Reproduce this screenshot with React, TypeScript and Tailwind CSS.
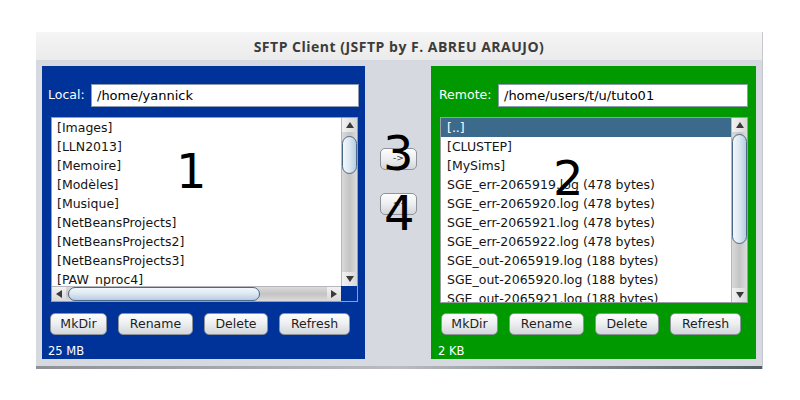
import React from 'react';

const localItems = [
  '[Images]',
  '[LLN2013]',
  '[Memoire]',
  '[Modèles]',
  '[Musique]',
  '[NetBeansProjects]',
  '[NetBeansProjects2]',
  '[NetBeansProjects3]',
  '[PAW_nproc4]',
];

const remoteItems = [
  '[..]',
  '[CLUSTEP]',
  '[MySims]',
  'SGE_err-2065919.log (478 bytes)',
  'SGE_err-2065920.log (478 bytes)',
  'SGE_err-2065921.log (478 bytes)',
  'SGE_err-2065922.log (478 bytes)',
  'SGE_out-2065919.log (188 bytes)',
  'SGE_out-2065920.log (188 bytes)',
  'SGE_out-2065921.log (188 bytes)',
];

function Arrow({ dir }: { dir: 'up' | 'down' | 'left' | 'right' }) {
  const points = {
    up: '4,1 8,7 0,7',
    down: '0,1 8,1 4,7',
    left: '1,4 7,0 7,8',
    right: '1,0 7,4 1,8',
  }[dir];
  return (
    <svg width="8" height="8" viewBox="0 0 8 8">
      <polygon points={points} fill="#3a3a3a" />
    </svg>
  );
}

function TextField({ value, width }: { value: string; width: string }) {
  return (
    <div className={`${width} h-[23px] bg-white border border-[#8d9bb0] flex items-center pl-[5px] text-[13px] text-black`}>
      {value}
    </div>
  );
}

function Button({ label, width }: { label: string; width: string }) {
  return (
    <div
      className={`${width} h-[22px] rounded-[5px] border border-[#8e9299] bg-gradient-to-b from-[#fdfdfd] via-[#eceef0] to-[#d3d6da] flex items-center justify-center text-[12.5px] text-[#1e1e1e]`}
    >
      {label}
    </div>
  );
}

function VScroll({ thumbTop, thumbHeight }: { thumbTop: string; thumbHeight: string }) {
  return (
    <div className="w-[16px] h-full flex flex-col border-l border-[#b4b8bd]">
      <div className="h-[14px] flex items-center justify-center bg-gradient-to-r from-[#f2f2f2] to-[#d8d8d8]">
        <Arrow dir="up" />
      </div>
      <div className="flex-1 flex flex-col bg-gradient-to-r from-[#dadada] via-[#c4c4c4] to-[#dcdcdc]">
        <div className={thumbTop} />
        <div
          className={`${thumbHeight} rounded-[8px] border border-[#4b6886] bg-gradient-to-r from-[#f3f8fc] via-[#dbe7f2] to-[#b8cde2]`}
        />
      </div>
      <div className="h-[14px] flex items-center justify-center bg-gradient-to-r from-[#f2f2f2] to-[#d8d8d8]">
        <Arrow dir="down" />
      </div>
    </div>
  );
}

function HScroll() {
  return (
    <div className="h-[15px] flex-1 flex border-t border-[#b4b8bd]">
      <div className="w-[14px] flex items-center justify-center bg-gradient-to-b from-[#f2f2f2] to-[#d8d8d8]">
        <Arrow dir="left" />
      </div>
      <div className="flex-1 flex bg-gradient-to-b from-[#dadada] via-[#c4c4c4] to-[#dcdcdc]">
        <div className="w-[2px]" />
        <div className="w-[192px] rounded-[8px] border border-[#4b6886] bg-gradient-to-b from-[#f3f8fc] via-[#dbe7f2] to-[#b8cde2]" />
      </div>
      <div className="w-[14px] flex items-center justify-center bg-gradient-to-b from-[#f2f2f2] to-[#d8d8d8]">
        <Arrow dir="right" />
      </div>
    </div>
  );
}

function ButtonRow({ offset }: { offset: string }) {
  return (
    <div className={`${offset} flex gap-[11px]`}>
      <Button label="MkDir" width="w-[57px]" />
      <Button label="Rename" width="w-[75px]" />
      <Button label="Delete" width="w-[64px]" />
      <Button label="Refresh" width="w-[71px]" />
    </div>
  );
}

export default function App() {
  return (
    <div className="relative w-[800px] h-[400px] bg-white pt-[32px] pl-[36px] font-['DejaVu_Sans',sans-serif]">
      <div className="w-[727px] flex flex-col border-r border-[#c4c8ce]">
        <div className="h-[28px] bg-gradient-to-b from-[#f5f5f5] to-[#ebebeb] flex items-center justify-center text-[14px] tracking-[0.5px] font-bold text-[#3c3c3c] font-['Open_Sans',sans-serif]">
          SFTP Client (JSFTP by F. ABREU ARAUJO)
        </div>

        <div className="h-[306px] bg-[#d6d9df] flex pt-[6px] pl-[6px]">
          {/* local side */}
          <div className="w-[323px] h-[293px] bg-[#003399] flex flex-col">
            <div className="mt-[18px] pl-[6px] flex items-center">
              <span className="w-[43px] text-[12.5px] text-white">Local:</span>
              <TextField value="/home/yannick" width="w-[268px]" />
            </div>
            <div className="mt-[10px] ml-[9px] w-[307px] h-[185px] border border-[#9a9ea4] bg-white flex flex-col">
              <div className="flex-1 flex min-h-0">
                <div className="flex-1 overflow-hidden pl-[5px] text-[12.5px] text-[#141414]">
                  {localItems.map((item) => (
                    <div key={item} className="h-[19px] leading-[19px] whitespace-nowrap">
                      {item}
                    </div>
                  ))}
                </div>
                <VScroll thumbTop="h-[4px]" thumbHeight="h-[38px]" />
              </div>
              <div className="flex">
                <HScroll />
                <div className="w-[16px] h-[15px] bg-[#003399]" />
              </div>
            </div>
            <ButtonRow offset="mt-[11px] ml-[8px]" />
            <div className="mt-[9px] pl-[6px] text-[11.5px] text-white leading-[14px]">25 MB</div>
          </div>

          {/* transfer buttons */}
          <div className="w-[66px] flex flex-col pl-[15px]">
            <div className="mt-[82px] w-[37px] h-[22px] rounded-[5px] border border-[#8e9299] bg-gradient-to-b from-[#fdfdfd] via-[#eceef0] to-[#d3d6da] flex items-center justify-center text-[9px] text-[#333]">
              -&gt;
            </div>
            <div className="mt-[23px] w-[37px] h-[22px] rounded-[5px] border border-[#8e9299] bg-gradient-to-b from-[#fdfdfd] via-[#eceef0] to-[#d3d6da] flex items-center justify-center text-[9px] text-[#333]">
              &lt;-
            </div>
          </div>

          {/* remote side */}
          <div className="w-[325px] h-[293px] bg-[#009900] flex flex-col">
            <div className="mt-[18px] pl-[8px] flex items-center">
              <span className="w-[59px] text-[12.5px] text-white">Remote:</span>
              <TextField value="/home/users/t/u/tuto01" width="w-[250px]" />
            </div>
            <div className="mt-[10px] ml-[9px] w-[308px] h-[186px] border border-[#9a9ea4] bg-white flex">
              <div className="flex-1 overflow-hidden text-[12.5px] text-[#141414]">
                {remoteItems.map((item, i) => (
                  <div
                    key={item}
                    className={`h-[19px] leading-[19px] whitespace-nowrap pl-[6px] ${
                      i === 0 ? 'bg-[#3b6a8d] text-white' : ''
                    }`}
                  >
                    {item}
                  </div>
                ))}
              </div>
              <VScroll thumbTop="h-[2px]" thumbHeight="h-[110px]" />
            </div>
            <ButtonRow offset="mt-[10px] ml-[10px]" />
            <div className="mt-[9px] pl-[7px] text-[11.5px] text-white leading-[14px]">2 KB</div>
          </div>
        </div>
        <div className="h-[3px] bg-gradient-to-r from-[#8e9196] via-[#b9bcc0] to-[#4f5d63]" />
      </div>

      {/* annotation numbers */}
      <div className="absolute left-[176px] top-[147px] text-[48px] leading-none text-black">1</div>
      <div className="absolute left-[553px] top-[154px] text-[48px] leading-none text-black">2</div>
      <div className="absolute left-[383px] top-[129px] text-[48px] leading-none text-black">3</div>
      <div className="absolute left-[384px] top-[189px] text-[48px] leading-none text-black">4</div>
    </div>
  );
}
